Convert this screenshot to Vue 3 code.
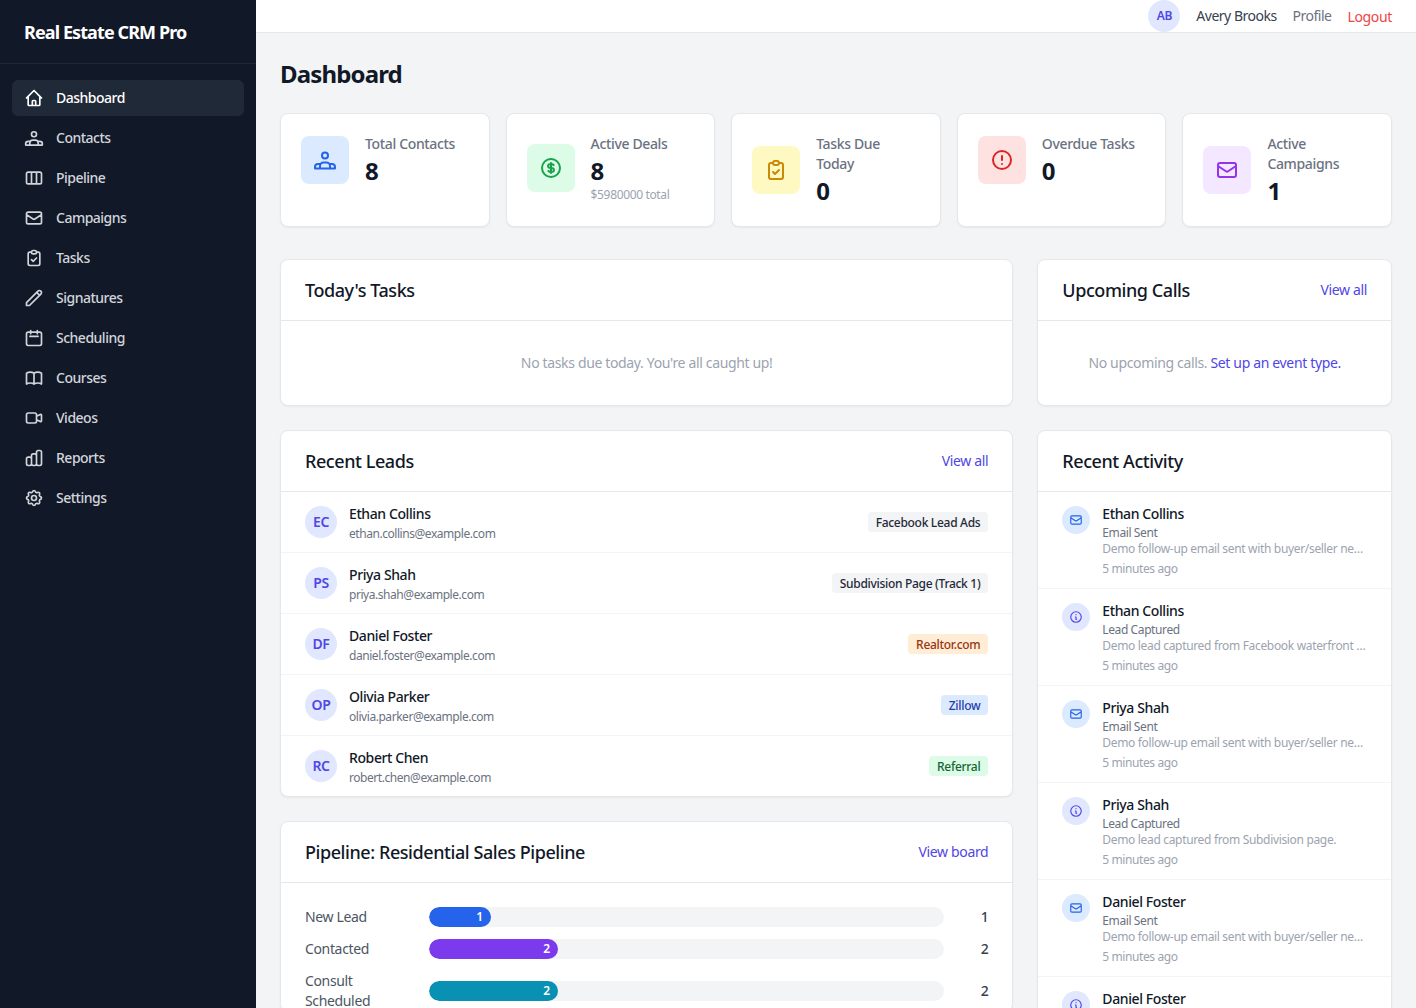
<script setup>
const P = {
  home: 'M3 12l2-2m0 0l7-7 7 7M5 10v10a1 1 0 001 1h3m10-11l2 2m-2-2v10a1 1 0 01-1 1h-3m-6 0a1 1 0 001-1v-4a1 1 0 011-1h2a1 1 0 011 1v4a1 1 0 001 1m-6 0h6',
  contacts: 'M15 7.5a3 3 0 11-6 0 3 3 0 016 0zM2 20.5h20M2 20.5V19a3 3 0 013-3h2M7 20.5V18a3.5 3.5 0 013.5-3.5h3A3.5 3.5 0 0117 18v2.5M22 20.5V19a3 3 0 00-3-3h-2',
  pipeline: 'M5 5h14a2 2 0 012 2v10a2 2 0 01-2 2H5a2 2 0 01-2-2V7a2 2 0 012-2zM9 5v14M15 5v14',
  mail: 'M3 8l7.89 5.26a2 2 0 002.22 0L21 8M5 19h14a2 2 0 002-2V7a2 2 0 00-2-2H5a2 2 0 00-2 2v10a2 2 0 002 2z',
  tasks: 'M9 5H7a2 2 0 00-2 2v12a2 2 0 002 2h10a2 2 0 002-2V7a2 2 0 00-2-2h-2M9 5a2 2 0 002 2h2a2 2 0 002-2M9 5a2 2 0 012-2h2a2 2 0 012 2m-6 9l2 2 4-4',
  pencil: 'M15.232 5.232l3.536 3.536m-2.036-5.036a2.5 2.5 0 113.536 3.536L6.5 21.036H3v-3.572L16.732 3.732z',
  calendar: 'M8 3v4m8-4v4M7 10h10M5 21h14a2 2 0 002-2V7a2 2 0 00-2-2H5a2 2 0 00-2 2v12a2 2 0 002 2z',
  book: 'M12 6.253v13m0-13C10.832 5.477 9.246 5 7.5 5S4.168 5.477 3 6.253v13C4.168 18.477 5.754 18 7.5 18s3.332.477 4.5 1.253m0-13C13.168 5.477 14.754 5 16.5 5c1.747 0 3.332.477 4.5 1.253v13C19.832 18.477 18.247 18 16.5 18c-1.746 0-3.332.477-4.5 1.253',
  video: 'M15 10l4.553-2.276A1 1 0 0121 8.618v6.764a1 1 0 01-1.447.894L15 14M5 18h8a2 2 0 002-2V8a2 2 0 00-2-2H5a2 2 0 00-2 2v8a2 2 0 002 2z',
  chart: 'M9 19v-6a2 2 0 00-2-2H5a2 2 0 00-2 2v6a2 2 0 002 2h2a2 2 0 002-2zm0 0V9a2 2 0 012-2h2a2 2 0 012 2v10m-6 0a2 2 0 002 2h2a2 2 0 002-2m0 0V5a2 2 0 012-2h2a2 2 0 012 2v14a2 2 0 01-2 2h-2a2 2 0 01-2-2z',
  cog: 'M10.325 4.317c.426-1.756 2.924-1.756 3.35 0a1.724 1.724 0 002.573 1.066c1.543-.94 3.31.826 2.37 2.37a1.724 1.724 0 001.065 2.572c1.756.426 1.756 2.924 0 3.35a1.724 1.724 0 00-1.066 2.573c.94 1.543-.826 3.31-2.37 2.37a1.724 1.724 0 00-2.572 1.065c-.426 1.756-2.924 1.756-3.35 0a1.724 1.724 0 00-2.573-1.066c-1.543.94-3.31-.826-2.37-2.37a1.724 1.724 0 00-1.065-2.572c-1.756-.426-1.756-2.924 0-3.35a1.724 1.724 0 001.066-2.573c-.94-1.543.826-3.31 2.37-2.37.996.608 2.296.07 2.572-1.065zM15 12a3 3 0 11-6 0 3 3 0 016 0z',
  dollar: 'M12 8c-1.657 0-3 .895-3 2s1.343 2 3 2 3 .895 3 2-1.343 2-3 2m0-8c1.11 0 2.08.402 2.599 1M12 8V7m0 1v8m0 0v1m0-1c-1.11 0-2.08-.402-2.599-1M21 12a9 9 0 11-18 0 9 9 0 0118 0z',
  alert: 'M12 8v4m0 4h.01M21 12a9 9 0 11-18 0 9 9 0 0118 0z',
  info: 'M13 16h-1v-4h-1m1-4h.01M21 12a9 9 0 11-18 0 9 9 0 0118 0z'
}
const nav = [
  ['Dashboard', 'home'], ['Contacts', 'contacts'], ['Pipeline', 'pipeline'], ['Campaigns', 'mail'],
  ['Tasks', 'tasks'], ['Signatures', 'pencil'], ['Scheduling', 'calendar'], ['Courses', 'book'],
  ['Videos', 'video'], ['Reports', 'chart'], ['Settings', 'cog']
]
const stats = [
  { label: 'Total Contacts', value: '8', icon: 'contacts', tone: 'blue' },
  { label: 'Active Deals', value: '8', sub: '$5980000 total', icon: 'dollar', tone: 'green' },
  { label: 'Tasks Due Today', value: '0', icon: 'tasks', tone: 'yellow' },
  { label: 'Overdue Tasks', value: '0', icon: 'alert', tone: 'red' },
  { label: 'Active Campaigns', value: '1', icon: 'mail', tone: 'purple' }
]
const leads = [
  { i: 'EC', name: 'Ethan Collins', email: 'ethan.collins@example.com', src: 'Facebook Lead Ads', tone: 'gray' },
  { i: 'PS', name: 'Priya Shah', email: 'priya.shah@example.com', src: 'Subdivision Page (Track 1)', tone: 'gray' },
  { i: 'DF', name: 'Daniel Foster', email: 'daniel.foster@example.com', src: 'Realtor.com', tone: 'orange' },
  { i: 'OP', name: 'Olivia Parker', email: 'olivia.parker@example.com', src: 'Zillow', tone: 'blue' },
  { i: 'RC', name: 'Robert Chen', email: 'robert.chen@example.com', src: 'Referral', tone: 'green' }
]
const mailDesc = 'Demo follow-up email sent with buyer/seller needs and next steps for the client.'
const acts = [
  { name: 'Ethan Collins', type: 'Email Sent', desc: mailDesc, mail: true },
  { name: 'Ethan Collins', type: 'Lead Captured', desc: 'Demo lead captured from Facebook waterfront campaign for review.', mail: false },
  { name: 'Priya Shah', type: 'Email Sent', desc: mailDesc, mail: true },
  { name: 'Priya Shah', type: 'Lead Captured', desc: 'Demo lead captured from Subdivision page.', mail: false },
  { name: 'Daniel Foster', type: 'Email Sent', desc: mailDesc, mail: true },
  { name: 'Daniel Foster', type: 'Lead Captured', desc: 'Demo lead captured from Realtor.com.', mail: false }
]
const stages = [
  { label: 'New Lead', n: 1, pct: 12, color: '#2563eb' },
  { label: 'Contacted', n: 2, pct: 25, color: '#7c3aed' },
  { label: 'Consult Scheduled', n: 2, pct: 25, color: '#0891b2' }
]
</script>

<template>
  <div class="app">
    <aside class="side">
      <div class="brand">Real Estate CRM Pro</div>
      <nav class="nav">
        <a v-for="(n, i) in nav" :key="n[0]" class="nav-item" :class="{ active: i === 0 }">
          <svg class="nav-ico" viewBox="0 0 24 24" fill="none" stroke="currentColor" stroke-width="2" stroke-linecap="round" stroke-linejoin="round"><path :d="P[n[1]]" /></svg>
          <span>{{ n[0] }}</span>
        </a>
      </nav>
    </aside>
    <div class="right">
      <header class="top">
        <span class="avatar">AB</span>
        <span class="uname">Avery Brooks</span>
        <a class="muted-link">Profile</a>
        <a class="logout">Logout</a>
      </header>
      <main class="main">
        <h1 class="h1">Dashboard</h1>
        <section class="stats">
          <div v-for="s in stats" :key="s.label" class="card stat">
            <div class="stat-in">
              <div class="stat-ico" :class="s.tone">
                <svg width="24" height="24" viewBox="0 0 24 24" fill="none" stroke="currentColor" stroke-width="2" stroke-linecap="round" stroke-linejoin="round"><path :d="P[s.icon]" /></svg>
              </div>
              <div>
                <div class="stat-label">{{ s.label }}</div>
                <div class="stat-val">{{ s.value }}</div>
                <div v-if="s.sub" class="stat-sub">{{ s.sub }}</div>
              </div>
            </div>
          </div>
        </section>
        <section class="grid">
          <div class="card l">
            <div class="card-h"><h2>Today's Tasks</h2></div>
            <div class="empty">No tasks due today. You're all caught up!</div>
          </div>
          <div class="card r">
            <div class="card-h"><h2>Upcoming Calls</h2><a class="link">View all</a></div>
            <div class="empty">No upcoming calls. <a class="link">Set up an event type.</a></div>
          </div>
          <div class="col l">
            <div class="card">
              <div class="card-h"><h2>Recent Leads</h2><a class="link">View all</a></div>
              <div v-for="p in leads" :key="p.i" class="lead">
                <span class="avatar">{{ p.i }}</span>
                <div class="lead-t">
                  <div class="name">{{ p.name }}</div>
                  <div class="email">{{ p.email }}</div>
                </div>
                <span class="badge" :class="p.tone">{{ p.src }}</span>
              </div>
            </div>
            <div class="card">
              <div class="card-h"><h2>Pipeline: Residential Sales Pipeline</h2><a class="link">View board</a></div>
              <div class="pipe">
                <div v-for="s in stages" :key="s.label" class="stage">
                  <div class="st-label">{{ s.label }}</div>
                  <div class="track"><div class="fill" :style="{ width: s.pct + '%', background: s.color }">{{ s.n }}</div></div>
                  <div class="st-n">{{ s.n }}</div>
                </div>
              </div>
            </div>
          </div>
          <div class="card r activity">
            <div class="card-h"><h2>Recent Activity</h2></div>
            <div v-for="(a, i) in acts" :key="i" class="act">
              <span class="act-ico" :class="a.mail ? 'mail' : 'inf'">
                <svg width="14" height="14" viewBox="0 0 24 24" fill="none" stroke="currentColor" stroke-width="2" stroke-linecap="round" stroke-linejoin="round"><path :d="a.mail ? P.mail : P.info" /></svg>
              </span>
              <div class="act-t">
                <div class="name">{{ a.name }}</div>
                <div class="type">{{ a.type }}</div>
                <div class="desc">{{ a.desc }}</div>
                <div class="time">5 minutes ago</div>
              </div>
            </div>
          </div>
        </section>
      </main>
    </div>
  </div>
</template>

<style>
html, body { margin: 0; height: 100%; overflow: hidden; }
</style>

<style scoped>
.app { display: flex; height: 100vh; overflow: hidden; font-family: "Noto Sans", "Open Sans", sans-serif; font-size: 14px; line-height: 20px; color: #111827; background: #f3f4f6; letter-spacing: -0.35px; }
.side { width: 256px; flex: none; background: #111827; color: #d1d5db; }
.brand { height: 63px; padding: 0 24px; display: flex; align-items: center; font-size: 18px; font-weight: 700; color: #fff; border-bottom: 1px solid #1f2937; letter-spacing: -0.9px; }
.nav { padding: 16px 12px; display: flex; flex-direction: column; gap: 4px; }
.nav-item { height: 36px; display: flex; align-items: center; gap: 12px; padding: 0 12px; border-radius: 6px; font-weight: 500; letter-spacing: -0.5px; }
.nav-item.active { background: #1f2937; color: #fff; }
.nav-ico { width: 20px; height: 20px; flex: none; }
.right { flex: 1; min-width: 0; display: flex; flex-direction: column; }
.top { flex: none; height: 32px; background: #fff; border-bottom: 1px solid #e5e7eb; display: flex; align-items: center; justify-content: flex-end; padding: 0 24px; gap: 16px; }
.avatar { width: 32px; height: 32px; flex: none; border-radius: 50%; background: #e0e7ff; color: #4f46e5; display: flex; align-items: center; justify-content: center; font-weight: 600; }
.top .avatar { font-size: 12px; }
.uname { color: #374151; letter-spacing: -0.5px; }
.muted-link { color: #6b7280; letter-spacing: -0.5px; }
.logout { color: #ef4444; padding-top: 2px; }
.main { flex: 1; overflow: hidden; padding: 24px; }
.h1 { margin: 0 0 20px; font-size: 24px; line-height: 34px; padding-bottom: 2px; font-weight: 700; letter-spacing: -0.85px; }
.card { background: #fff; border: 1px solid #e5e7eb; border-radius: 8px; box-shadow: 0 1px 2px rgba(0,0,0,.05); }
.stats { display: grid; grid-template-columns: repeat(5, 1fr); gap: 16px; margin-bottom: 32px; }
.stat { padding: 20px; }
.stat-in { display: flex; align-items: center; gap: 16px; }
.stat-ico { width: 48px; height: 48px; flex: none; border-radius: 8px; display: flex; align-items: center; justify-content: center; }
.stat-ico.blue { background: #dbeafe; color: #2563eb; }
.stat-ico.green { background: #dcfce7; color: #16a34a; }
.stat-ico.yellow { background: #fef9c3; color: #ca8a04; }
.stat-ico.red { background: #fee2e2; color: #dc2626; }
.stat-ico.purple { background: #f3e8ff; color: #9333ea; }
.stat-label { color: #6b7280; font-weight: 500; }
.stat-val { font-size: 24px; line-height: 30px; padding-top: 2px; font-weight: 700; }
.stat-sub { font-size: 12px; line-height: 14px; padding-top: 2px; color: #9ca3af; }
.grid { display: grid; grid-template-columns: repeat(12, 1fr); gap: 24px; align-items: start; }
.l { grid-column: span 8; }
.r { grid-column: span 4; }
.col { display: flex; flex-direction: column; gap: 24px; }
.card-h { height: 60px; box-sizing: content-box; padding: 0 24px; display: flex; align-items: center; justify-content: space-between; border-bottom: 1px solid #e5e7eb; }
.card-h h2 { margin: 0; font-size: 18px; font-weight: 500; letter-spacing: -0.43px; }
.link { color: #4f46e5; }
.empty { padding: 32px 24px; text-align: center; color: #9ca3af; }
.lead { height: 61px; box-sizing: border-box; padding: 0 24px; display: flex; align-items: center; gap: 12px; border-bottom: 1px solid #f3f4f6; }
.lead:last-child { border-bottom: 0; height: 60px; }
.lead-t { flex: 1; min-width: 0; padding-top: 2px; }
.name { font-weight: 500; color: #111827; letter-spacing: -0.4px; }
.email { font-size: 12px; line-height: 18px; margin-top: 1px; color: #6b7280; letter-spacing: -0.45px; }
.badge { font-size: 12px; line-height: 18px; padding: 2px 8px 0; border-radius: 4px; font-weight: 500; letter-spacing: -0.3px; }
.badge.gray { background: #f3f4f6; color: #1f2937; }
.badge.orange { background: #ffedd5; color: #9a3412; }
.badge.blue { background: #dbeafe; color: #1e40af; }
.badge.green { background: #dcfce7; color: #166534; }
.pipe { padding: 24px 24px 0; display: flex; flex-direction: column; gap: 12px; }
.stage { display: flex; align-items: center; gap: 12px; }
.st-label { width: 112px; flex: none; color: #4b5563; }
.track { flex: 1; height: 20px; border-radius: 10px; background: #f3f4f6; overflow: hidden; }
.fill { height: 100%; border-radius: 10px; color: #fff; font-size: 12px; font-weight: 600; display: flex; align-items: center; justify-content: flex-end; padding-right: 8px; box-sizing: border-box; }
.st-n { width: 32px; flex: none; text-align: right; font-weight: 500; color: #374151; }
.act { height: 97px; box-sizing: border-box; padding: 14px 24px 0; display: flex; gap: 12px; border-bottom: 1px solid #f3f4f6; }
.act-ico { width: 28px; height: 28px; flex: none; border-radius: 50%; display: flex; align-items: center; justify-content: center; }
.act-ico.mail { background: #dbeafe; color: #2563eb; }
.act-ico.inf { background: #e0e7ff; color: #4f46e5; }
.act-t { flex: 1; min-width: 0; margin-top: -2px; }
.type { font-size: 12px; line-height: 16px; color: #6b7280; margin-top: 1px; letter-spacing: -0.4px; }
.desc { font-size: 12px; line-height: 16px; color: #9ca3af; white-space: nowrap; overflow: hidden; text-overflow: ellipsis; letter-spacing: -0.33px; }
.time { font-size: 12px; line-height: 16px; color: #9ca3af; margin-top: 4px; letter-spacing: -0.4px; }
</style>
